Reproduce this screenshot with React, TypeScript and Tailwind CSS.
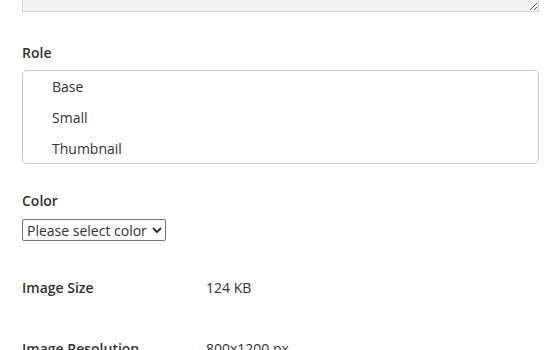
const font = { fontFamily: '"Open Sans", "Noto Sans", sans-serif' }

const roles = ['Base', 'Small', 'Thumbnail']

const details = [
  { label: 'Image Size', value: '124 KB' },
  { label: 'Image Resolution', value: '800x1200 px' },
]

export default function App() {
  return (
    <div className="h-[350px] w-[552px] overflow-hidden bg-white pl-[22px] pr-[13px] text-[14px] text-[#333]" style={font}>
      <textarea
        readOnly
        className="-mt-[40px] block h-[52px] w-full rounded-none border border-[#d3d3d3] bg-[#f2f2f2]"
      />

      <div className="mt-[31px]">
        <div className="h-[20px] leading-[20px] font-semibold">Role</div>
        <ul className="mt-[7px] h-[94px] rounded-[5px] border border-[#cccccc] bg-white">
          {roles.map((role) => (
            <li key={role} className="flex h-[31px] items-center pl-[29px]">
              {role}
            </li>
          ))}
        </ul>
      </div>

      <div className="mt-[27px]">
        <div className="h-[20px] leading-[20px] font-semibold">Color</div>
        <select
          className="mt-[8px] block h-[22px] w-[144px] rounded-[2px] border border-[#767676] bg-white text-[14px] text-[#333]"
          style={font}
          defaultValue=""
        >
          <option value="">Please select color</option>
          <option value="red">Red</option>
          <option value="blue">Blue</option>
        </select>
      </div>

      <div className="mt-[37px] flex flex-col gap-[41px]">
        {details.map((row) => (
          <div key={row.label} className="flex h-[20px] items-center leading-[20px]">
            <span className="w-[184px] shrink-0 font-semibold">{row.label}</span>
            <span>{row.value}</span>
          </div>
        ))}
      </div>
    </div>
  )
}
